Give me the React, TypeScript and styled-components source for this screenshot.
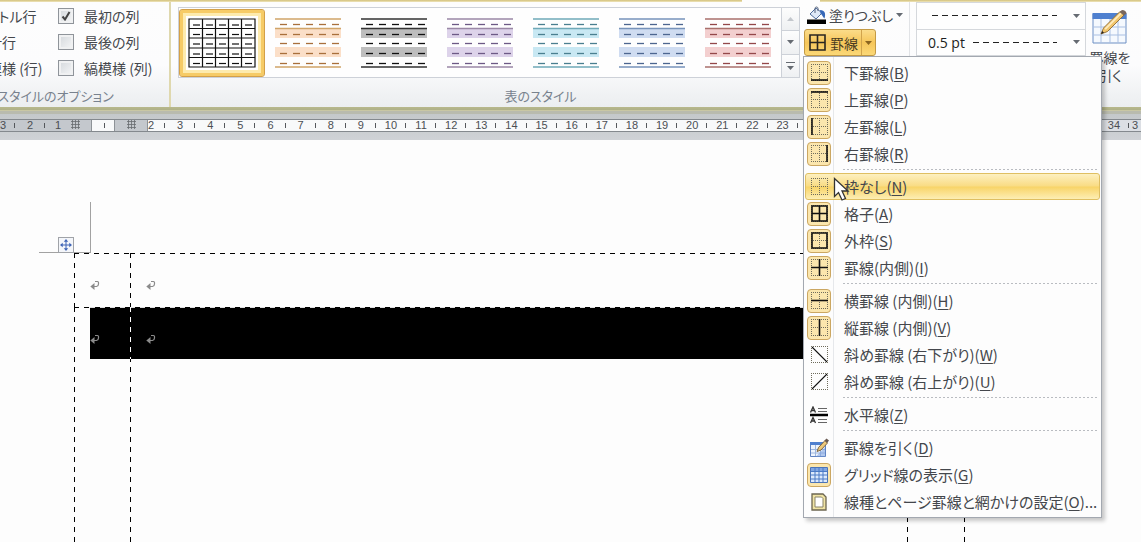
import React from "react";
import styled, { createGlobalStyle, css } from "styled-components";

const Global = createGlobalStyle`
  *, *::before, *::after { box-sizing: border-box; }
  html, body { margin: 0; height: 100%; }
  body {
    font-family: "Noto Sans CJK JP", "Noto Sans", sans-serif;
    font-feature-settings: "palt";
    font-size: 14px;
    color: #44474c;
    background: #fdfdfd;
  }
  #root { height: 100%; }
  button, select, input { font: inherit; font-feature-settings: inherit; color: inherit; }
`;

const Window = styled.div`
  display: flex;
  flex-direction: column;
  min-height: 100%;
  overflow: hidden;
`;

/* ---------- ribbon ---------- */

const TabEdge = styled.div`
  display: flex;
  height: 2px;
  background: #fdfdfd;
`;
const EdgeLine = styled.div<{ $grow?: boolean }>`
  flex: ${(p) => (p.$grow ? "1" : "0 0 321px")};
  margin-right: ${(p) => (p.$grow ? "78px" : "0")};
  background: linear-gradient(#d2c07a, #efe6bd);
`;
const Ribbon = styled.div`
  display: flex;
  height: 105px;
  background: linear-gradient(#fdfdfd 0%, #fcfcfd 60%, #eff1f3 90%, #eceef0 100%);
`;
const Group = styled.section<{ $grow?: boolean }>`
  flex: ${(p) => (p.$grow ? "1" : "none")};
  min-width: 0;
  display: flex;
  flex-direction: column;
`;
const GroupBody = styled.div`
  display: flex;
  height: 83px;
`;
const GroupTitle = styled.h2`
  margin: 0;
  height: 22px;
  font-size: 13px;
  font-weight: 400;
  line-height: 22px;
  text-align: center;
  white-space: nowrap;
  color: #78828e;
`;
const OptionsClip = styled.div`
  flex: 0 0 171px;
  display: flex;
  justify-content: flex-end;
  overflow: hidden;
  border-right: 2px solid #dfd8ae;
`;
const OptionsGroup = styled(Group)`
  flex: 0 0 240px;
`;
const OptionGrid = styled.div`
  display: grid;
  grid-template-columns: 110px 111px;
  grid-auto-rows: 26px;
  justify-content: end;
  height: 83px;
  padding-top: 1px;
`;
const OptionLabel = styled.label`
  display: flex;
  align-items: center;
  gap: 10px;
  height: 26px;
  white-space: nowrap;
`;
const TickWrap = styled.span`
  display: grid;
  place-items: center;
  width: 16px;
  height: 16px;
  & > * { grid-area: 1 / 1; }
  svg { pointer-events: none; }
`;
const TickInput = styled.input`
  appearance: none;
  width: 16px;
  height: 16px;
  margin: 0;
  border: 1px solid #8f949a;
  background: linear-gradient(135deg, #d3d7db, #f6f7f8);
  box-shadow: inset 0 0 0 2px #f0f1f2;
`;

const Gallery = styled.div`
  flex: 1;
  min-width: 0;
  display: flex;
  height: 71px;
  margin: 5px 3px 7px 7px;
  border: 1px solid #cdd1d8;
  background: #fefefe;
`;
const Styles = styled.div`
  flex: 1;
  display: flex;
  align-items: center;
  overflow: hidden;
`;
const StyleButton = styled.button<{ $on?: boolean }>`
  flex: 0 0 86px;
  display: grid;
  place-items: center;
  height: 68px;
  padding: 0;
  border: 1px solid transparent;
  border-radius: 3px;
  background: none;
  ${(p) =>
    p.$on &&
    css`
      border-color: #d3a048;
      background: #fff;
      box-shadow: inset 0 0 0 3px #f6cb66, inset 0 0 0 6px #fdebae;
    `}
`;
const Scroller = styled.div`
  display: flex;
  flex-direction: column;
  width: 18px;
  border-left: 1px solid #cdd1d8;
`;
const ScrollButton = styled.button`
  flex: 1;
  display: grid;
  place-items: center;
  padding: 0;
  border: 0;
  background: linear-gradient(#fdfdfd, #eef0f2);
  & + & { border-top: 1px solid #cdd1d8; }
`;

const ShadeTools = styled.div`
  flex: 0 0 106px;
  display: flex;
  flex-direction: column;
  gap: 2px;
  align-items: flex-start;
`;
const Divider = styled.div`
  width: 1px;
  margin-bottom: 4px;
  background: #e1e3e6;
`;
const ShadeButton = styled.button`
  display: flex;
  align-items: center;
  gap: 3px;
  height: 25px;
  margin-left: 4px;
  padding: 0;
  border: 0;
  background: none;
  white-space: nowrap;
`;
const Anchor = styled.div`
  position: relative;
`;
const SplitButton = styled.div`
  display: flex;
  height: 27px;
  width: 72px;
  margin-left: 1px;
  border: 1px solid #c39a45;
  border-radius: 3px;
  background: linear-gradient(#fbdc8a, #f6c65a 50%, #fbd877);
`;
const SplitMain = styled.button`
  flex: 1;
  display: flex;
  align-items: center;
  gap: 4px;
  padding: 0 0 0 4px;
  border: 0;
  background: none;
  color: #4a3c22;
  white-space: nowrap;
`;
const SplitArrow = styled.button`
  flex: 0 0 14px;
  display: grid;
  place-items: center;
  padding: 0;
  border: 0;
  border-left: 1px solid #d1a44c;
  background: none;
`;

const LineGroup = styled(Group)`
  flex: 0 0 170px;
  margin-left: 6px;
  height: 54px;
  border: 1px solid #d5d8dc;
  background: #fefefe;
`;
const LineField = styled.div`
  flex: 1;
  display: grid;
  align-items: center;
  & > * { grid-area: 1 / 1; }
  & + & { border-top: 1px solid #d5d8dc; }
`;
const LineSelect = styled.select`
  appearance: none;
  width: 100%;
  height: 24px;
  margin: 0;
  padding: 0 0 0 11px;
  border: 0;
  background: none;
  font-family: "Open Sans", "Noto Sans", sans-serif;
  color: #1d1f22;
`;
const DashRule = styled.span<{ $from: number }>`
  height: 1px;
  margin: 0 28px 0 ${(p) => p.$from}px;
  pointer-events: none;
  background: repeating-linear-gradient(90deg, #222 0 6px, transparent 6px 10px);
`;
const FieldArrow = styled.span`
  display: flex;
  justify-self: end;
  padding-right: 5px;
  pointer-events: none;
`;
const DrawButton = styled.button`
  flex: 0 0 48px;
  display: flex;
  flex-direction: column;
  align-items: center;
  gap: 4px;
  margin-right: 7px;
  padding: 8px 0 0;
  border: 0;
  background: none;
  line-height: 18px;
`;

/* ---------- menu ---------- */

const Menu = styled.div`
  position: absolute;
  z-index: 5;
  top: 100%;
  left: 0;
  width: 299px;
  padding: 2px 1px;
  border: 1px solid #a3a8b0;
  background: linear-gradient(90deg, #fdfdfd 29px, #e6e8eb 29px 30px, #fdfdfd 30px);
  box-shadow: 3px 3px 4px rgba(0, 0, 0, 0.22);
`;
const MenuRow = styled.button<{ $hot?: boolean }>`
  display: flex;
  align-items: center;
  gap: 13px;
  width: 100%;
  height: 27px;
  padding: 0 0 0 1px;
  border: 1px solid transparent;
  border-radius: 3px;
  background: none;
  font-size: 15px;
  line-height: 20px;
  text-align: left;
  white-space: nowrap;
  u { text-underline-offset: 2px; text-decoration-thickness: 1px; }
  ${(p) =>
    p.$hot &&
    css`
      border-color: #dfbf62;
      background: linear-gradient(#fdf0c0, #f9dc84 48%, #f8d468 52%, #fdeeb4);
    `}
`;
const IconSlot = styled.span<{ $on?: boolean }>`
  flex: 0 0 24px;
  display: grid;
  place-items: center;
  height: 24px;
  border: 1px solid transparent;
  border-radius: 4px;
  ${(p) =>
    p.$on &&
    css`
      border-color: #cba762;
      background: #fbe6ad;
    `}
`;
const MenuRule = styled.hr`
  height: 6px;
  margin: 0 2px 0 38px;
  border: 0;
  background: repeating-linear-gradient(90deg, #b9bcc1 0 2px, transparent 2px 4px) 0 2px / 100% 1px no-repeat;
`;
const Pointer = styled.svg`
  position: absolute;
  left: 30px;
  top: 148px;
  z-index: 6;
  pointer-events: none;
`;

/* ---------- ruler ---------- */

const RibbonEdge = styled.div`
  height: 3px;
  background: linear-gradient(#b8b88c, #aeb088);
`;
const RulerBand = styled.div`
  padding: 8px 0;
  border-top: 1px solid #c9c7a4;
  background: linear-gradient(#c3c7c9, #cfd2d6);
  box-shadow: inset 0 3px 0 #b9bbae;
`;
const Ruler = styled.div`
  display: flex;
  height: 13px;
  border-top: 1px solid #84898e;
  border-bottom: 1px solid #84898e;
  font-family: "Liberation Sans", Arial, sans-serif;
  font-size: 11px;
  line-height: 11px;
  color: #4b4e52;
  background: #f8f9fa;
`;
const RulerPart = styled.div<{ $w?: number; $tone?: "dim" | "pale"; $end?: boolean; $start?: boolean }>`
  flex: ${(p) => (p.$w ? `0 0 ${p.$w}px` : "1 1 0")};
  min-width: 0;
  display: grid;
  grid-template-columns: ${(p) => (p.$start ? "0 auto 1fr" : "1fr auto 1fr")};
  align-items: center;
  overflow: hidden;
  background: ${(p) => (p.$tone === "dim" ? "#c4c8cd" : p.$tone === "pale" ? "#dcdfe4" : "#f8f9fa")};
  ${(p) => p.$end && "border-right: 1px solid #8d9297;"}
`;
const Tick = styled.i`
  justify-self: end;
  grid-column: 3;
  width: 1px;
  height: 5px;
  background: #55585c;
`;
const Num = styled.span`
  grid-column: 2;
`;

/* ---------- document ---------- */

const Page = styled.main`
  flex: 1;
  display: flex;
  flex-direction: column;
  background: #fdfdfd;
`;
const CornerMark = styled.div`
  position: relative;
  width: 52px;
  height: 51px;
  margin: 62px 0 0 39px;
  border-right: 1px solid #a2a2a2;
  border-bottom: 1px solid #a2a2a2;
`;
const MoveHandle = styled.button`
  position: absolute;
  left: 19px;
  bottom: -1px;
  display: grid;
  place-items: center;
  width: 16px;
  height: 16px;
  padding: 0;
  border: 1px solid #a0a3a8;
  background: #f4f6fa;
`;
const hDash = (c: string) => `repeating-linear-gradient(90deg, ${c} 0 5px, transparent 5px 10px)`;
const vDash = (c: string) => `repeating-linear-gradient(180deg, ${c} 0 5px, transparent 5px 10px)`;
const DocTable = styled.table`
  flex: 1;
  display: flex;
  flex-direction: column;
  margin: 0 176px 0 74px;
  border-spacing: 0;
  tbody { flex: 1; display: flex; flex-direction: column; }
`;
const DocRow = styled.tr<{ $rest?: boolean }>`
  display: flex;
  flex: ${(p) => (p.$rest ? "1 0 182px" : "0 0 54px")};
`;
const Cell = styled.td<{ $w?: number }>`
  display: flex;
  flex: ${(p) => (p.$w ? `0 0 ${p.$w}px` : "1")};
  padding: 0 0 0 ${(p) => (p.$w === 1 ? "0" : "16px")};
  background:
    ${vDash("#000")} 0 0 / 1px 100% no-repeat,
    ${hDash("#000")} 0 0 / 100% 1px no-repeat;
`;
const CellText = styled.div<{ $dark?: boolean; $divided?: boolean }>`
  flex: 1;
  height: ${(p) => (p.$dark ? "52px" : "54px")};
  margin-left: ${(p) => (p.$divided ? "-16px" : "0")};
  padding: 27px 0 0 ${(p) => (p.$divided ? "16px" : "0")};
  ${(p) =>
    p.$dark &&
    css`
      background:
        ${p.$divided ? `${vDash("#fff")} 0 0 / 1px 100% no-repeat,` : ""}
        ${hDash("#ddd")} 0 0 / 100% 1px no-repeat,
        #000;
    `}
  svg { display: block; }
`;

/* ---------- drawings ---------- */

const Down = ({ color = "#666b72" }: { color?: string }) => (
  <svg width="7" height="4" viewBox="0 0 7 4"><path d="M0 0h7L3.5 4z" fill={color} /></svg>
);
const ReturnMark = () => (
  <svg width="10" height="11" viewBox="0 0 10 11" fill="none" stroke="#8b8b8b">
    <path d="M5 1.500h2.500q1 0 1 1V4q0 2-2 2.500H3" strokeWidth="1.200" />
    <path d="M4.500 3v7L.3 6.500z" fill="#8b8b8b" stroke="none" />
  </svg>
);
const GridMark = () => (
  <svg width="9" height="9" viewBox="0 0 9 9" stroke="#686c70" strokeWidth=".8">
    <path d="M0 1.500h9M0 4.500h9M0 7.500h9M1.500 0v9M4.500 0v9M7.500 0v9" />
  </svg>
);

const dashCols = [5, 18, 31, 44, 57];
const Preview = ({ line, dash, fill }: { line: string; dash: string; fill: string }) => (
  <svg width="66" height="50" viewBox="0 0 66 50">
    <path d="M0 11h66v9H0zM0 29h66v10H0z" fill={fill} />
    <path d="M0 1h66M0 10.500h66M0 49h66" stroke={line} strokeWidth="1.500" />
    {[7, 17, 26, 36, 46].map((y) =>
      dashCols.map((x) => <path key={`${x}-${y}`} d={`M${x} ${y - 0.5}h7`} stroke={dash} strokeWidth="1.300" />)
    )}
  </svg>
);
const PreviewGrid = () => (
  <svg width="68" height="50" viewBox="0 0 68 50" stroke="#111" strokeWidth="1.200">
    <path fill="none" d="M1 1h66v48H1zM1 10.500h66M1 20h66M1 30h66M1 39.500h66M14.500 1v48M27.500 1v48M40.500 1v48M53.500 1v48" />
    {[7, 16.5, 26, 36, 45.5].map((y) =>
      dashCols.map((x) => <path key={`${x}-${y}`} d={`M${x} ${y}h7`} />)
    )}
  </svg>
);

const BorderIcon = ({ solid, noInner }: { solid?: string; noInner?: boolean }) => (
  <svg width="17" height="17" viewBox="0 0 17 17" fill="none">
    <path
      d={`M0 .5h17M0 16.500h17M.5 0v17M16.500 0v17${noInner ? "" : "M8.500 0v17M0 8.500h17"}`}
      stroke="#6f6c5c"
      strokeDasharray="1 1"
      shapeRendering="crispEdges"
    />
    {solid && <path d={solid} stroke="#111" strokeWidth={noInner ? 1.1 : 1.6} />}
  </svg>
);
const HorizontalLineIcon = () => (
  <svg width="18" height="18" viewBox="0 0 18 18" fill="none" stroke="#333">
    <path d="M.5 6.500 3 1l2.500 5.500M1.500 4.500h3M.5 17 3 11.500 5.500 17M1.500 15h3" strokeWidth="1.300" />
    <path d="M8 2.500h9M8 5.500h9M8 13.500h9M8 16.500h9" stroke="#666" />
    <path d="M0 9h18" stroke="#000" strokeWidth="2.500" />
  </svg>
);
const DrawTableIcon = () => (
  <svg width="36" height="34" viewBox="0 0 36 34">
    <path d="M1 4h33v29H1z" fill="#f5f9fe" stroke="#6d8fc4" />
    <path d="M.5 3h34v6H.5z" fill="#4f80cf" />
    <path d="M1 17h33M1 25h33M9 9v24M18 9v24M26 9v24" stroke="#a9bfe2" fill="none" />
    <path d="M9 24 11.500 18 28 1.500l4 3.500-16.500 16.500z" fill="#f1c56b" stroke="#8d6a33" strokeWidth=".9" />
    <path d="m12.500 18.500 16-16 1.300 1.200-16 16z" fill="#fdeabc" />
    <path d="m27.500 2 2.500-2q4 0 4.500 3.500L32 5.500z" fill="#7a675c" />
    <path d="m9 24 1.300-3 1.700 1.700z" fill="#222" />
  </svg>
);
const DrawTableSmall = () => (
  <svg width="20" height="20" viewBox="0 0 20 20">
    <path d="M1.500 4.500h15v14h-15z" fill="#eef4fd" stroke="#5f83c2" />
    <path d="M1 4h13v3H1z" fill="#4f80cf" />
    <path d="M2 11.500h14M2 15h14M6.500 7v11M11.500 7v11" stroke="#9db6de" fill="none" />
    <path d="M16 9v9.500H7z" fill="#7ea3e0" opacity=".55" />
    <path d="M8 13.500 9.500 9.500 16 2.500l2.500 2.500-6.500 7z" fill="#edc879" stroke="#735b38" strokeWidth=".9" />
    <path d="m15.500 2.500 2-2 2.500 2-2 2.500z" fill="#6a5a52" />
  </svg>
);
const GridlinesIcon = () => (
  <svg width="18" height="16" viewBox="0 0 18 16">
    <path d="M.5.5h17v15H.5z" fill="#dce9fc" stroke="#4b74b8" />
    <path d="M1 1h16v3H1z" fill="#7fa5e2" />
    <path d="M1 4.500h16M1 8h16M1 12h16M5 1v14M9 1v14M13 1v14" stroke="#4b7ac6" />
  </svg>
);
const PageBorderIcon = () => (
  <svg width="16" height="18" viewBox="0 0 16 18">
    <path d="M1 1h11l3 3v13H1z" fill="#efe3a4" stroke="#6c6650" strokeWidth="1.300" />
    <path d="M4 4h6.500L12 5.500V14H4z" fill="#fff" stroke="#8a8468" />
  </svg>
);
const BucketIcon = () => (
  <svg width="19" height="18" viewBox="0 0 19 18">
    <path d="M3 8 9 2l6 5-6 6z" fill="#dfe9f8" stroke="#4f6c9c" />
    <path d="M8 7V2.500C8 .5 11 .5 11 2.500V5" fill="none" stroke="#53617a" />
    <path d="M13 4c5 0 6 4 4.500 8.500-1.500-1-2-3.500-4-5z" fill="#3668b8" />
    <path d="M0 13.500h19V18H0z" fill="#000" />
  </svg>
);
const MoveIcon = () => (
  <svg width="12" height="12" viewBox="0 0 12 12" fill="#3f64b5">
    <path d="M5.500 2h1v3.500H10v1H6.500V10h-1V6.500H2v-1h3.500z" />
    <path d="M6 0l2.200 2.700H3.800zM6 12l2.200-2.700H3.800zM0 6l2.700-2.200v4.400zM12 6 9.300 3.800v4.400z" />
  </svg>
);

/* ---------- data ---------- */

type Item = { text: string; k: string; tail?: string; on?: boolean; hot?: boolean; icon: React.ReactNode };
const sections: Item[][] = [
  [
    { text: "下罫線", k: "B", on: true, icon: <BorderIcon solid="M0 16h17" /> },
    { text: "上罫線", k: "P", on: true, icon: <BorderIcon solid="M0 1h17" /> },
    { text: "左罫線", k: "L", on: true, icon: <BorderIcon solid="M1 0v17" /> },
    { text: "右罫線", k: "R", on: true, icon: <BorderIcon solid="M16 0v17" /> },
  ],
  [
    { text: "枠なし", k: "N", hot: true, icon: <BorderIcon /> },
    { text: "格子", k: "A", on: true, icon: <BorderIcon solid="M1 1h15v15H1zM8.500 1v15M1 8.500h15" /> },
    { text: "外枠", k: "S", on: true, icon: <BorderIcon solid="M1 1h15v15H1z" /> },
    { text: "罫線(内側)", k: "I", on: true, icon: <BorderIcon solid="M8.500 0v17M0 8.500h17" /> },
  ],
  [
    { text: "横罫線 (内側)", k: "H", on: true, icon: <BorderIcon solid="M0 8.500h17" /> },
    { text: "縦罫線 (内側)", k: "V", on: true, icon: <BorderIcon solid="M8.500 0v17" /> },
    { text: "斜め罫線 (右下がり)", k: "W", icon: <BorderIcon noInner solid="M1 1l15 15" /> },
    { text: "斜め罫線 (右上がり)", k: "U", icon: <BorderIcon noInner solid="M1 16 16 1" /> },
  ],
  [{ text: "水平線", k: "Z", icon: <HorizontalLineIcon /> }],
  [
    { text: "罫線を引く", k: "D", icon: <DrawTableSmall /> },
    { text: "グリッド線の表示", k: "G", on: true, icon: <GridlinesIcon /> },
    { text: "線種とページ罫線と網かけの設定", k: "O", tail: "...", icon: <PageBorderIcon /> },
  ],
];

const options: [string, boolean][] = [
  ["タイトル行", true],
  ["最初の列", true],
  ["集計行", false],
  ["最後の列", false],
  ["縞模様 (行)", true],
  ["縞模様 (列)", false],
];

const previews = [
  { line: "#d0a468", dash: "#a9703c", fill: "#fbdfc8" },
  { line: "#333", dash: "#111", fill: "#bdbdbd" },
  { line: "#9a88a6", dash: "#6d5a86", fill: "#ddd3ea" },
  { line: "#6fa9b8", dash: "#4a7f90", fill: "#c8e8f3" },
  { line: "#7793ba", dash: "#4d6690", fill: "#cfdcf1" },
  { line: "#a9706c", dash: "#94484a", fill: "#f3cfcf" },
];

const rulerNumbers = Array.from({ length: 32 }, (_, i) => i + 3);

export default function App() {
  return (
    <Window>
      <Global />
      <TabEdge><EdgeLine $grow /><EdgeLine /></TabEdge>
      <Ribbon>
        <OptionsClip>
          <OptionsGroup>
            <OptionGrid>
              {options.map(([name, on]) => (
                <OptionLabel key={name}>
                  <TickWrap>
                    <TickInput type="checkbox" defaultChecked={on} />
                    {on && (
                      <svg width="10" height="10" viewBox="0 0 10 10" fill="none" stroke="#444" strokeWidth="2">
                        <path d="M1.500 5.500 4 8.500 8.500 1" />
                      </svg>
                    )}
                  </TickWrap>
                  {name}
                </OptionLabel>
              ))}
            </OptionGrid>
            <GroupTitle>表スタイルのオプション</GroupTitle>
          </OptionsGroup>
        </OptionsClip>

        <Group $grow>
          <GroupBody>
            <Gallery>
              <Styles>
                <StyleButton $on aria-label="表 (格子)"><PreviewGrid /></StyleButton>
                {previews.map((p) => (
                  <StyleButton key={p.line} aria-label="表のスタイル"><Preview {...p} /></StyleButton>
                ))}
              </Styles>
              <Scroller>
                <ScrollButton aria-label="上へ">
                  <svg width="7" height="4" viewBox="0 0 7 4"><path d="M0 4h7L3.500 0z" fill="#c3c7cc" /></svg>
                </ScrollButton>
                <ScrollButton aria-label="下へ"><Down /></ScrollButton>
                <ScrollButton aria-label="その他">
                  <svg width="9" height="8" viewBox="0 0 9 8" fill="#666b72"><path d="M0 0h9v1H0zM1 4h7L4.500 8z" /></svg>
                </ScrollButton>
              </Scroller>
            </Gallery>
            <ShadeTools>
              <ShadeButton><BucketIcon />塗りつぶし<Down /></ShadeButton>
              <Anchor>
                <SplitButton>
                  <SplitMain>
                    <svg width="17" height="17" viewBox="0 0 17 17" fill="none" stroke="#2a2620" strokeWidth="1.600">
                      <path d="M1 1h15v15H1zM8.500 1v15M1 8.500h15" />
                    </svg>
                    罫線
                  </SplitMain>
                  <SplitArrow aria-label="罫線メニュー"><Down color="#8a6420" /></SplitArrow>
                </SplitButton>
                <Menu role="menu">
                  {sections.map((rows, s) => (
                    <React.Fragment key={s}>
                      {s > 0 && <MenuRule />}
                      {rows.map((r) => (
                        <MenuRow key={r.k} role="menuitem" $hot={r.hot}>
                          <IconSlot $on={r.on}>{r.icon}</IconSlot>
                          <span>{r.text}(<u>{r.k}</u>){r.tail}</span>
                        </MenuRow>
                      ))}
                    </React.Fragment>
                  ))}
                </Menu>
                <Pointer width="17" height="25" viewBox="0 0 17 25">
                  <path d="M1.500 1.500v18l4-4 3.500 7.500 3.500-1.500-3.500-7.500h6z" fill="#fff" stroke="#333" strokeWidth="1.300" />
                </Pointer>
              </Anchor>
            </ShadeTools>
            <Divider />
          </GroupBody>
          <GroupTitle>表のスタイル</GroupTitle>
        </Group>

        <LineGroup>
          <LineField>
            <LineSelect aria-label="ペンのスタイル"><option aria-label="破線" /></LineSelect>
            <DashRule $from={15} />
            <FieldArrow><Down /></FieldArrow>
          </LineField>
          <LineField>
            <LineSelect aria-label="ペンの太さ"><option>0.5 pt</option></LineSelect>
            <DashRule $from={56} />
            <FieldArrow><Down /></FieldArrow>
          </LineField>
        </LineGroup>
        <DrawButton><DrawTableIcon /><span>罫線を<br />引く</span></DrawButton>
      </Ribbon>
      <RibbonEdge />

      <RulerBand>
        <Ruler>
          <RulerPart $w={15} $tone="dim" $start><Num>3</Num><Tick /></RulerPart>
          <RulerPart $w={30} $tone="dim"><Num>2</Num><Tick /></RulerPart>
          <RulerPart $w={26} $tone="dim"><Num>1</Num></RulerPart>
          <RulerPart $w={21} $tone="dim" $end $start><Num><GridMark /></Num></RulerPart>
          <RulerPart $w={13}><Tick /></RulerPart>
          <RulerPart $w={10} $end />
          <RulerPart $w={33} $tone="dim" $end><Num><GridMark /></Num></RulerPart>
          <RulerPart $w={17} $start><Num>2</Num><Tick /></RulerPart>
          {rulerNumbers.map((n) => (
            <RulerPart key={n} $tone={n > 29 ? "pale" : undefined}><Num>{n}</Num><Tick /></RulerPart>
          ))}
          <RulerPart $w={12} $tone="pale"><Num>3</Num></RulerPart>
        </Ruler>
      </RulerBand>

      <Page>
        <CornerMark><MoveHandle aria-label="表の移動"><MoveIcon /></MoveHandle></CornerMark>
        <DocTable>
          <tbody>
            <DocRow>
              <Cell $w={56}><CellText><ReturnMark /></CellText></Cell>
              <Cell><CellText><ReturnMark /></CellText></Cell>
              <Cell $w={57} />
              <Cell $w={1} />
            </DocRow>
            <DocRow $rest>
              <Cell $w={56}><CellText $dark><ReturnMark /></CellText></Cell>
              <Cell><CellText $dark $divided><ReturnMark /></CellText></Cell>
              <Cell $w={57} />
              <Cell $w={1} />
            </DocRow>
          </tbody>
        </DocTable>
      </Page>
    </Window>
  );
}
